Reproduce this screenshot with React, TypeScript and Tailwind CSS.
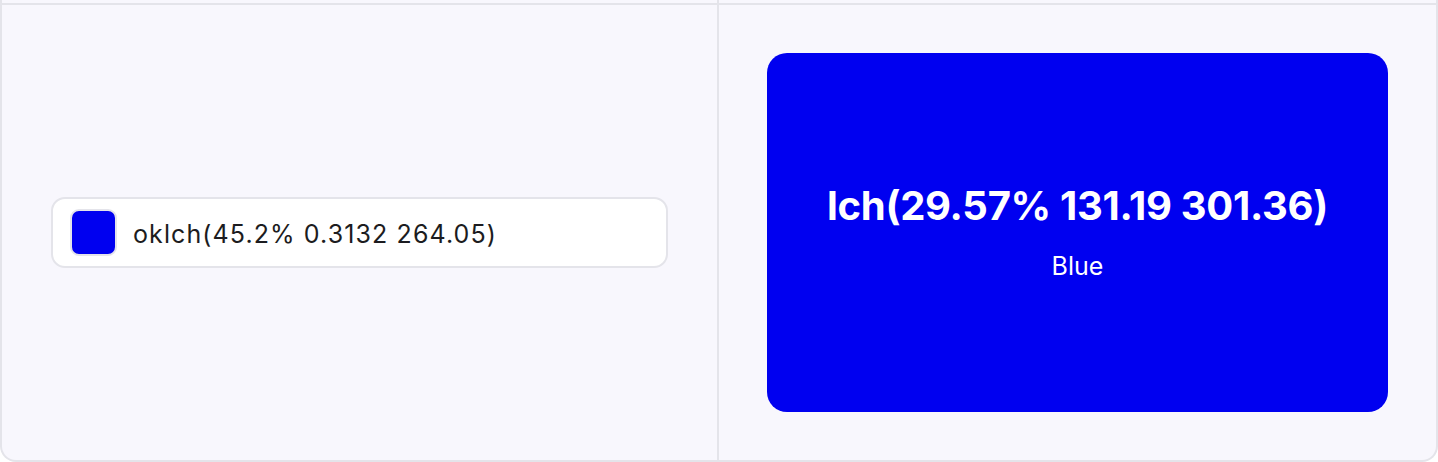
export default function App() {
  return (
    <div className="w-[1438px] h-[462px] bg-white" style={{ fontFamily: "Inter, 'Noto Sans', sans-serif" }}>
      <div className="h-full flex flex-col bg-[#f8f7fd] border-x-2 border-b-2 border-[#e4e4ea] rounded-b-[16px] overflow-hidden">
        <div className="h-[3px] grid grid-cols-2 shrink-0">
          <div className="border-r-2 border-[#e4e4ea]" />
          <div />
        </div>
        <div className="flex-1 grid grid-cols-2 border-t-2 border-[#e4e4ea]">
          <div className="border-r-2 border-[#e4e4ea] flex items-center px-[49px]">
            <div className="w-full h-[71px] bg-white border-2 border-[#e4e4ea] rounded-[14px] flex items-center px-[17px] gap-[16px]">
              <div className="w-[47px] h-[47px] rounded-[9px] bg-[#0000f0] border-2 border-[#e4e4ea]" />
              <span className="text-[25px] text-[#1c1c20] tracking-[1.1px] leading-none pt-[3px]">oklch(45.2% 0.3132 264.05)</span>
            </div>
          </div>
          <div className="flex px-[48px] py-[48px]">
            <div className="flex-1 bg-[#0000f0] rounded-[20px] flex flex-col items-center justify-center text-white">
              <div className="text-[40px] font-bold leading-none tracking-[-0.3px]">lch(29.57% 131.19 301.36)</div>
              <div className="text-[25px] mt-[28px] leading-none">Blue</div>
            </div>
          </div>
        </div>
      </div>
    </div>
  );
}
